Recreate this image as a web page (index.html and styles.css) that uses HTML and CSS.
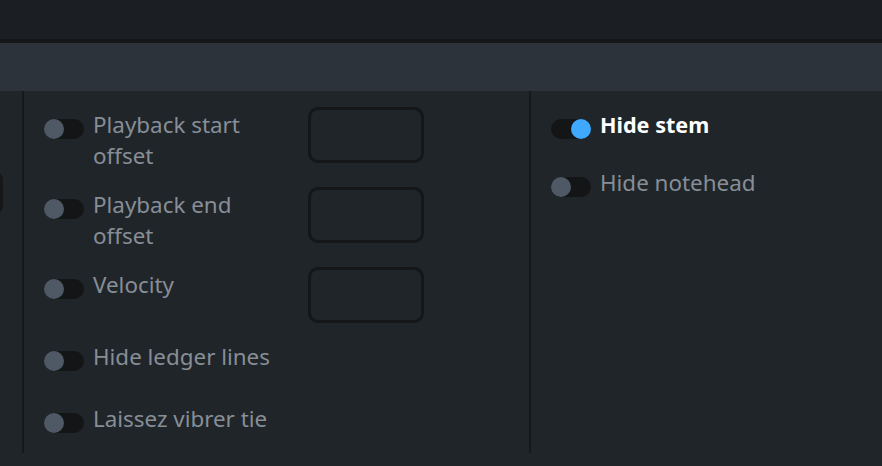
FILE: index.html
```html
<!DOCTYPE html>
<html lang="en">
<head>
<meta charset="utf-8">
<title>Note properties</title>
<link rel="stylesheet" href="styles.css">
</head>
<body>
<div class="topbar"></div>
<div class="strip"></div>
<div class="band"></div>
<div class="content">
  <div class="col1">
    <div class="cut-box"></div>
  </div>
  <div class="divider"></div>
  <div class="col2">
    <div class="input-row">
      <div class="opt"><span class="toggle"><span class="knob"></span></span><span class="label">Playback start offset</span></div>
      <div class="box"></div>
    </div>
    <div class="input-row">
      <div class="opt"><span class="toggle"><span class="knob"></span></span><span class="label">Playback end offset</span></div>
      <div class="box"></div>
    </div>
    <div class="input-row">
      <div class="opt"><span class="toggle"><span class="knob"></span></span><span class="label">Velocity</span></div>
      <div class="box"></div>
    </div>
    <div class="plain-rows">
      <div class="opt"><span class="toggle"><span class="knob"></span></span><span class="label">Hide ledger lines</span></div>
      <div class="opt"><span class="toggle"><span class="knob"></span></span><span class="label">Laissez vibrer tie</span></div>
    </div>
  </div>
  <div class="divider"></div>
  <div class="col3">
    <div class="opt"><span class="toggle on"><span class="knob"></span></span><span class="label active">Hide stem</span></div>
    <div class="opt"><span class="toggle"><span class="knob"></span></span><span class="label">Hide notehead</span></div>
  </div>
</div>
</body>
</html>
```
FILE: styles.css
```css
html, body {
  margin: 0;
  padding: 0;
  background: #20252a;
  height: 100%;
  overflow: hidden;
  font-family: "Noto Sans", "Open Sans", sans-serif;
}
.topbar { height: 39px; background: #1b1e22; }
.strip { height: 4px; background: #151719; }
.band { height: 48px; background: #2d333b; }
.content {
  display: flex;
  height: 362px;
}
.col1 {
  width: 22px;
  overflow: hidden;
  position: relative;
}
.cut-box {
  margin-top: 81px;
  margin-left: -98px;
  width: 95px;
  height: 36px;
  border: 3px solid #151719;
  border-radius: 8px;
}
.divider {
  width: 2px;
  background: #16191c;
}
.col2 {
  width: 505px;
  padding: 16px 0 0 20px;
  box-sizing: border-box;
  display: flex;
  flex-direction: column;
  gap: 24px;
}
.input-row {
  display: flex;
  align-items: flex-start;
  height: 56px;
}
.input-row .opt {
  width: 264px;
  margin-top: 4px;
}
.input-row .label { width: 182px; }
.box {
  width: 110px;
  height: 50px;
  border: 3px solid #141618;
  border-radius: 10px;
}
.plain-rows {
  display: flex;
  flex-direction: column;
  gap: 31px;
  margin-top: -4px;
}
.opt {
  display: flex;
  align-items: flex-start;
  gap: 9px;
}
.toggle {
  flex: none;
  width: 40px;
  height: 20px;
  margin-top: 8px;
  border-radius: 10px;
  background: #131517;
  display: flex;
}
.knob {
  width: 20px;
  height: 20px;
  border-radius: 50%;
  background: #4f5965;
}
.toggle.on { justify-content: flex-end; }
.toggle.on .knob { background: #3fa9ff; }
.label {
  font-size: 22.4px;
  line-height: 31px;
  margin: -2px 0 2px;
  color: #878e96;
}
.label.active {
  color: #ffffff;
  font-weight: 700;
  font-size: 21.6px;
}
.col3 {
  flex: 1;
  padding: 20px 0 0 20px;
  display: flex;
  flex-direction: column;
  gap: 27px;
}
```
